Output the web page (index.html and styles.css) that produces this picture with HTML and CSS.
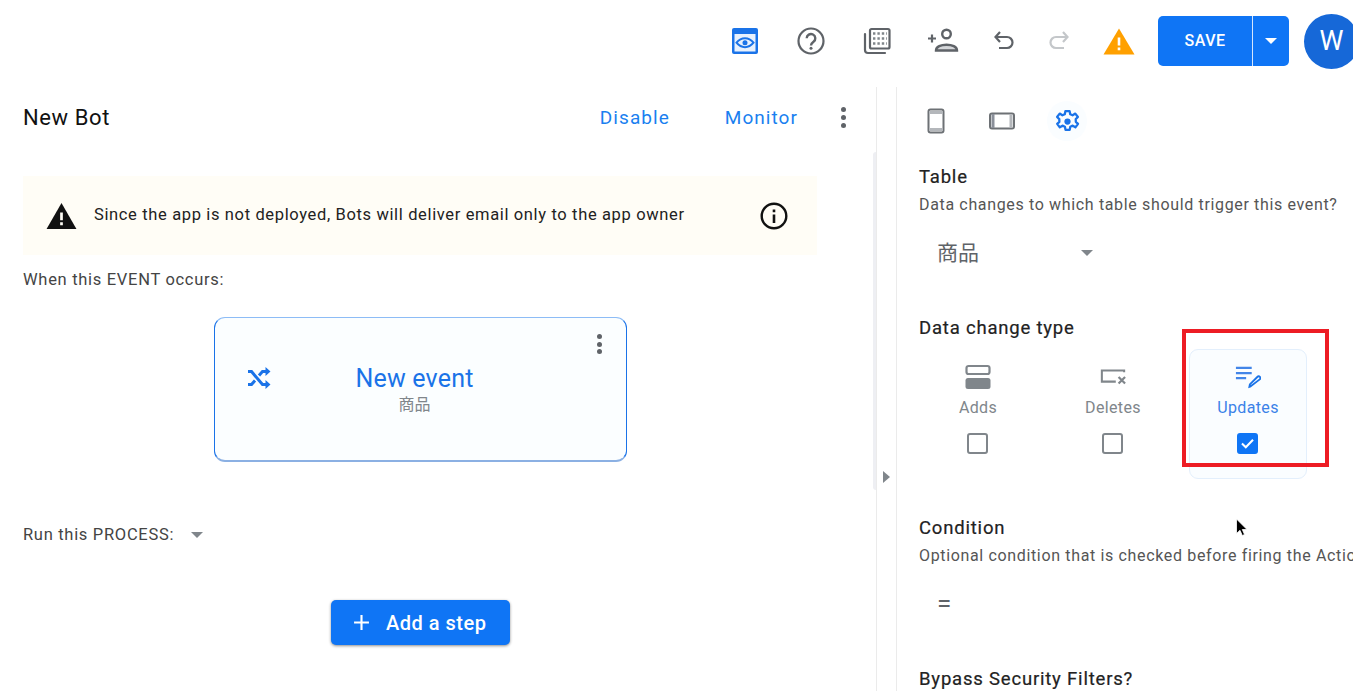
FILE: index.html
```html
<!DOCTYPE html>
<html lang="en">
<head>
<meta charset="utf-8">
<title>New Bot</title>
<link rel="stylesheet" href="styles.css">
</head>
<body>
<div class="page">
  <header class="topbar">
    <svg class="tool t-preview" viewBox="0 0 28 28"><path fill="#1a73e8" d="M1 3a2 2 0 0 1 2-2h22a2 2 0 0 1 2 2v22a2 2 0 0 1-2 2H3a2 2 0 0 1-2-2z"/><rect x="3.500" y="7" width="21" height="17.500" fill="#e8f1fd"/><path fill="none" stroke="#1a73e8" stroke-width="2" d="M5.500 15.700c4.800-6 12.200-6 17 0-4.800 6-12.200 6-17 0z"/><circle cx="14" cy="15.700" r="2.500" fill="#1a73e8"/></svg>
    <svg class="tool t-help" viewBox="0 0 28 28"><circle cx="14" cy="14" r="12.500" fill="none" stroke="#5f6368" stroke-width="2.200"/><path fill="none" stroke="#5f6368" stroke-width="2.400" d="M9.700 11.300a4.300 4.300 0 1 1 6.800 3.500c-1.500 1.100-2.500 1.900-2.500 3.700"/><circle cx="14" cy="21.300" r="1.500" fill="#5f6368"/></svg>
    <svg class="tool t-gallery" viewBox="0 0 28 28"><path fill="none" stroke="#5f6368" stroke-width="2.200" stroke-linecap="round" d="M2 7v16a3 3 0 0 0 3 3h17"/><rect x="7" y="2" width="19.500" height="19.500" rx="1.500" fill="none" stroke="#5f6368" stroke-width="2.200"/><path fill="none" stroke="#80868b" stroke-width="2.600" stroke-dasharray="2.400 2" d="M10 6.500h14M10 11.500h14M10 16.500h14"/></svg>
    <svg class="tool t-person" viewBox="0 0 32 28"><path fill="none" stroke="#5f6368" stroke-width="2.200" d="M1 11.500h8M5 7.500v8"/><circle cx="19.500" cy="7" r="4.300" fill="none" stroke="#5f6368" stroke-width="2.400"/><path fill="#d5d7da" stroke="#5f6368" stroke-width="2.400" d="M9 23.500c0-3.800 5-5.800 10.500-5.800S30 19.700 30 23.500z"/></svg>
    <svg class="tool t-undo" viewBox="0 0 24 24"><path fill="none" stroke="#5f6368" stroke-width="2.200" d="M8 3 3.500 8 8 13M3.500 8H15a5.500 5.500 0 0 1 0 11H7"/></svg>
    <svg class="tool t-redo" viewBox="0 0 24 24"><path fill="none" stroke="#c4c7ca" stroke-width="2.200" d="m16 3 4.500 5-4.500 5M20.500 8H9a5.500 5.500 0 0 0 0 11h8"/></svg>
    <svg class="tool t-warn" viewBox="0 0 32 28"><path fill="#ffa000" d="M16 1.500 31.500 27.500H.5z"/><path fill="#fff" d="M14.700 10.500h2.600v8h-2.600zM14.700 20.500h2.600v2.800h-2.600z"/></svg>
    <div class="save">
      <span class="save-label">SAVE</span>
      <span class="save-arrow"><i class="caret caret-white"></i></span>
    </div>
    <div class="avatar">W</div>
  </header>

  <div class="workspace">
    <main class="left">
      <div class="bot-head">
        <h1 class="bot-name">New Bot</h1>
        <a class="link link-disable">Disable</a>
        <a class="link link-monitor">Monitor</a>
        <span class="kebab kebab-head"><i></i><i></i><i></i></span>
      </div>
      <div class="banner">
        <svg class="banner-warn" viewBox="0 0 32 28"><path fill="#111" d="M16 1 31.500 28H.5z"/><path fill="#fffdf6" d="M14.600 11h2.800v8h-2.800zM14.600 21h2.800v3h-2.800z"/></svg>
        <span class="banner-text">Since the app is not deployed, Bots will deliver email only to the app owner</span>
        <svg class="banner-info" viewBox="0 0 28 28"><circle cx="14" cy="14" r="12.300" fill="none" stroke="#111" stroke-width="2.400"/><path fill="#111" d="M12.700 12.500h2.600V21h-2.600zM12.700 7.500h2.600v2.700h-2.600z"/></svg>
      </div>
      <p class="caption event-caption">When this EVENT occurs:</p>
      <div class="event-card">
        <svg class="shuffle" viewBox="0 0 24 24"><path fill="none" stroke="#1a73e8" stroke-width="3" d="M1 5.500h3.500l11 13H19M1 18.500h3.500l3.500-4M12 9.500l3.500-4H19"/><path fill="#1a73e8" d="m18.500 1 5 4.500-5 4.500zM18.500 14l5 4.500-5 4.500z"/></svg>
        <div class="event-text">
          <div class="event-title">New event</div>
          <div class="event-sub">商品</div>
        </div>
        <span class="kebab kebab-card"><i></i><i></i><i></i></span>
      </div>
      <div class="process-row">
        <span class="caption">Run this PROCESS:</span>
        <i class="caret caret-grey"></i>
      </div>
      <div class="step-wrap">
        <button class="add-step"><svg class="plus" viewBox="0 0 16 16"><path fill="none" stroke="#fff" stroke-width="2" d="M8 1v14M1 8h14"/></svg>Add a step</button>
      </div>
      <div class="scroll-thumb"></div>
    </main>

    <div class="gutter"><i class="handle"></i></div>

    <aside class="right">
      <div class="tabs">
        <svg class="tab tab-phone" viewBox="0 0 18 26"><rect x="1.500" y="1.500" width="15" height="23" rx="2" fill="#fff" stroke="#6d7175" stroke-width="2"/><rect x="2" y="3" width="14" height="3" fill="#b4b7bb"/><rect x="2" y="20" width="14" height="3" fill="#b4b7bb"/></svg>
        <svg class="tab tab-tablet" viewBox="0 0 26 18"><rect x="1" y="1.500" width="24" height="15" rx="2" fill="#fff" stroke="#6d7175" stroke-width="2"/><rect x="2.500" y="2" width="3" height="14" fill="#8a8f99"/><rect x="20.500" y="2" width="3" height="14" fill="#b4b7bb"/></svg>
        <span class="tab-gear">
          <svg viewBox="0 0 24 24"><path fill="none" stroke="#1a73e8" stroke-width="2.200" stroke-linejoin="round" d="M10 2h4l.6 3 2.300 1 2.600-1.600 2.500 3.300-2.100 2 .1 2.600 2.100 2-2.500 3.300-2.600-1.600-2.300 1-.6 3h-4l-.6-3-2.300-1-2.600 1.600-2.500-3.300 2.100-2-.1-2.600-2.100-2 2.500-3.300 2.600 1.600 2.300-1z"/><circle cx="12" cy="12" r="3" fill="#1a73e8"/></svg>
        </span>
      </div>

      <section class="field field-table">
        <h2 class="label">Table</h2>
        <p class="hint">Data changes to which table should trigger this event?</p>
        <div class="select"><span class="select-value">商品</span><i class="caret caret-grey"></i></div>
      </section>

      <section class="field field-type">
        <h2 class="label">Data change type</h2>
        <div class="type-grid">
          <div class="type-card">
            <svg class="type-icon" viewBox="0 0 26 26"><rect x="1.500" y="2" width="23" height="8" rx="2" fill="none" stroke="#80868b" stroke-width="2.200"/><rect x=".5" y="14" width="25" height="11" rx="2.500" fill="#80868b"/></svg>
            <span class="type-name">Adds</span>
            <i class="check"></i>
          </div>
          <div class="type-card">
            <svg class="type-icon" viewBox="0 0 28 26"><path fill="none" stroke="#80868b" stroke-width="2.200" d="M17 18H2V6h24v2"/><path fill="none" stroke="#80868b" stroke-width="2.400" d="m20 13 7 7M27 13l-7 7"/></svg>
            <span class="type-name">Deletes</span>
            <i class="check"></i>
          </div>
          <div class="type-card type-on">
            <svg class="type-icon" viewBox="0 0 28 26"><path fill="#4285e8" d="M1 2h17v2.500H1zM1 7.500h17V10H1zM1 13h11v2.500H1z"/><path fill="none" stroke="#1a73e8" stroke-width="2" d="m17 23-1.500.5.500-2.500 8-8c1-1 2-1 2.800-.2s.8 1.800-.2 2.800z"/></svg>
            <span class="type-name">Updates</span>
            <i class="check check-on"><svg viewBox="0 0 20 20"><path fill="none" stroke="#fff" stroke-width="2.400" d="m3.500 10 4.500 4.500 8.500-9"/></svg></i>
          </div>
        </div>
      </section>

      <section class="field field-condition">
        <h2 class="label">Condition</h2>
        <p class="hint hint-clip">Optional condition that is checked before firing the Action</p>
        <div class="equals">=</div>
      </section>

      <section class="field field-bypass">
        <h2 class="label">Bypass Security Filters?</h2>
      </section>
    </aside>
  </div>

  <div class="annotation"></div>
  <svg class="cursor" viewBox="0 0 14 20"><path fill="#000" stroke="#fff" stroke-width=".8" d="M1.500 1v14.500l3.500-3.200 2.300 5.200 2.200-1-2.200-5h4.700z"/></svg>
</div>
</body>
</html>
```

FILE: styles.css
```css
* { box-sizing: border-box; }
html, body { margin: 0; height: 100%; background: #fff; }
body { font-family: Roboto, "Noto Sans CJK JP", sans-serif; color: #202124; overflow: hidden; }
.page { position: relative; width: 1353px; height: 691px; overflow: hidden; }
h1, h2, p { margin: 0; font-weight: 400; }
i { display: block; }

.topbar { height: 87px; display: flex; align-items: center; padding-left: 731px; padding-bottom: 5px; }
.tool { flex: none; display: block; }
.t-preview { width: 28px; height: 28px; }
.t-help { width: 28px; height: 28px; margin-left: 38px; }
.t-gallery { width: 28px; height: 28px; margin-left: 38px; }
.t-person { width: 32px; height: 28px; margin-left: 36px; }
.t-undo { width: 24px; height: 24px; margin-left: 33px; }
.t-redo { width: 24px; height: 24px; margin-left: 31px; }
.t-warn { width: 32px; height: 28px; margin-left: 32px; }

.save { flex: none; width: 131px; height: 50px; margin-left: 23px; background: #0f75f5; border-radius: 5px; display: flex; color: #fff; }
.save-label { width: 95px; display: flex; align-items: center; justify-content: center; font-size: 16px; font-weight: 500; letter-spacing: .5px; border-right: 1px solid #d6e6fc; padding-bottom: 2px; }
.save-arrow { flex: 1; display: flex; align-items: center; justify-content: center; }
.avatar { flex: none; width: 55px; height: 55px; margin-left: 15px; border-radius: 50%; background: #1668d8; color: #fff; font-size: 27px; display: flex; align-items: center; justify-content: center; }

.caret { width: 0; height: 0; border-left: 6px solid transparent; border-right: 6px solid transparent; }
.caret-white { border-top: 6px solid #fff; }
.caret-grey { border-top: 6px solid #80868b; }

.workspace { display: flex; height: 604px; }
.left { position: relative; width: 877px; flex: none; padding: 0 0 0 23px; border-right: 1px solid #ebebeb; }
.scroll-thumb { position: absolute; right: 0; top: 65px; width: 3px; height: 338px; background: #eeeff3; border-radius: 3px 0 0 3px; }
.gutter { width: 20px; flex: none; border-right: 1px solid #ebebeb; display: flex; align-items: center; justify-content: center; }
.handle { width: 0; height: 0; border-top: 6px solid transparent; border-bottom: 6px solid transparent; border-left: 7px solid #80868b; margin-top: 176px; margin-left: -1px; }

.bot-head { height: 60px; display: flex; align-items: center; padding-right: 30px; }
.bot-name { font-size: 22px; letter-spacing: .6px; color: #111; flex: 1; }
.link { color: #1a7ff0; font-size: 19px; letter-spacing: 1.05px; }
.link-monitor { margin-left: 55px; }
.kebab { display: flex; flex-direction: column; gap: 3px; }
.kebab i { width: 5px; height: 5px; border-radius: 50%; background: #5f6368; }
.kebab-head { margin-left: 43px; }

.banner { margin-top: 29px; width: 794px; height: 79px; background: #fffdf6; display: flex; align-items: center; padding-left: 23px; }
.banner-warn { width: 31px; height: 27px; flex: none; }
.banner-text { margin-left: 17px; font-size: 16.500px; letter-spacing: .64px; color: #222; white-space: nowrap; margin-bottom: 2px; }
.banner-info { width: 28px; height: 28px; margin-left: 75px; flex: none; }

.caption { font-size: 16.500px; letter-spacing: .7px; color: #444; }
.event-caption { margin-top: 15px; }

.event-card { position: relative; margin: 28px 0 0 191px; width: 413px; height: 145px; border: 1px solid #1a73e8; border-top-color: #8dbcf6; border-bottom-width: 2px; border-bottom-color: #8bb0e3; border-radius: 11px; background: #fbfeff; display: flex; }
.shuffle { width: 24px; height: 24px; margin: 48px 0 0 32px; flex: none; }
.event-text { position: absolute; left: 0; right: 12px; top: 45px; text-align: center; }
.event-title { font-size: 25px; color: #1a73e8; line-height: 31px; letter-spacing: .2px; }
.event-sub { font-size: 16px; color: #80868b; line-height: 22px; }
.kebab-card { position: absolute; top: 16px; right: 24px; gap: 2.500px; }

.process-row { margin-top: 63px; display: flex; align-items: center; gap: 17px; }

.step-wrap { margin-top: 56px; padding-left: 308px; }
.add-step { width: 179px; height: 45px; border: 0; border-radius: 5px; background: #0f75f5; color: #fff; font: 500 20px Roboto, sans-serif; letter-spacing: .5px; box-shadow: 0 1px 3px rgba(0,0,0,.45); display: flex; align-items: center; padding: 0 0 0 22px; }
.plus { width: 17px; height: 17px; margin-right: 16px; flex: none; }

.right { flex: 1; min-width: 0; padding-left: 22px; overflow: hidden; }
.tabs { height: 68px; display: flex; align-items: center; }
.tab-phone { width: 18px; height: 26px; margin-left: 8px; }
.tab-tablet { width: 26px; height: 18px; margin-left: 44px; }
.tab-gear { width: 40px; height: 40px; margin-left: 32px; border-radius: 50%; background: #fafdff; display: flex; align-items: center; justify-content: center; }
.tab-gear svg { width: 25px; height: 25px; display: block; }

.label { font-size: 18.500px; font-weight: 400; letter-spacing: .8px; color: #222; line-height: 24px; -webkit-text-stroke: .2px #222; }
.hint { font-size: 16px; letter-spacing: .65px; color: #555; line-height: 20px; white-space: nowrap; margin-top: 6px; }
.field-table { margin-top: 10px; }
.select { display: flex; align-items: center; height: 40px; margin: 16px 0 0 18px; gap: 102px; }
.select-value { font-size: 21px; color: #5f6368; }
.select .caret { margin-top: 3px; }
.field-type { margin-top: 45px; }

.type-grid { display: flex; margin-top: 9px; width: 391px; }
.type-card { flex: none; width: 118px; height: 130px; border-radius: 9px; display: flex; flex-direction: column; align-items: center; padding-top: 14px; border: 1px solid transparent; color: #80868b; }
.type-card + .type-card { margin-left: 17px; }
.type-on { background: #fafdff; border-color: #e3effc; color: #3b82e8; }
.type-icon { width: 26px; height: 26px; display: block; }
.type-name { font-size: 16px; letter-spacing: .35px; margin-top: 7px; line-height: 22px; }
.check { width: 21px; height: 21px; margin: 14px 1px 0 0; border: 2px solid #80868b; border-radius: 3px; }
.check-on { background: #0f75f5; border-color: #0f75f5; }
.check-on svg { display: block; width: 17px; height: 17px; }

.field-condition { margin-top: 37px; }
.field-condition .hint { margin-top: 6px; }
.equals { margin: 23px 0 0 18px; font-size: 26px; color: #5f6368; line-height: 28px; }
.field-bypass { margin-top: 50px; }

.annotation { position: absolute; left: 1182px; top: 329px; width: 147px; height: 138px; border: 4px solid #ed1c24; pointer-events: none; }
.cursor { position: absolute; left: 1235px; top: 518px; width: 14px; height: 20px; }
```
